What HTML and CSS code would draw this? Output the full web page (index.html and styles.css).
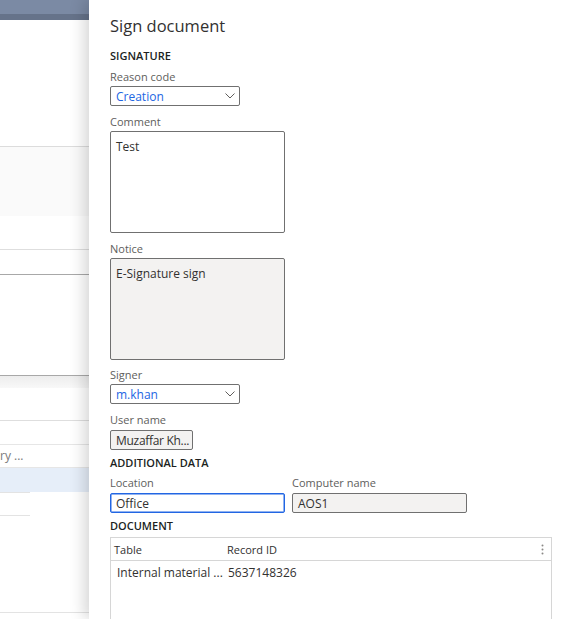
FILE: index.html
```html
<!DOCTYPE html>
<html lang="en">
<head>
<meta charset="utf-8">
<title>Sign document</title>
<link rel="stylesheet" href="styles.css">
</head>
<body>
<div class="page">
  <div class="bg">
    <div class="bg-top"></div>
    <div class="bg-r1"></div>
    <div class="bg-r2"></div>
    <div class="bg-r3"></div>
    <div class="bg-r4"></div>
    <div class="bg-r5"></div>
    <div class="bg-r6"></div>
    <div class="bg-r7"></div>
    <div class="bg-r8"></div>
    <div class="bg-r9">ry ...</div>
    <div class="bg-r10"></div>
    <div class="bg-r11"></div>
    <div class="bg-r12"></div>
    <div class="bg-r13"></div>
  </div>

  <div class="panel">
    <h1 class="title">Sign document</h1>

    <div class="section s-signature">SIGNATURE</div>

    <div class="label l-reason">Reason code</div>
    <div class="select"><span class="select-value">Creation</span>
      <svg class="chevron" width="10" height="6" viewBox="0 0 10 6"><path d="M0.5 0.5 L5 5 L9.5 0.5" fill="none" stroke="#605e5c" stroke-width="1"/></svg>
    </div>

    <div class="label l-comment">Comment</div>
    <div class="textarea">Test</div>

    <div class="label l-notice">Notice</div>
    <div class="textarea readonly">E-Signature sign</div>

    <div class="label l-signer">Signer</div>
    <div class="select"><span class="select-value">m.khan</span>
      <svg class="chevron" width="10" height="6" viewBox="0 0 10 6"><path d="M0.5 0.5 L5 5 L9.5 0.5" fill="none" stroke="#605e5c" stroke-width="1"/></svg>
    </div>

    <div class="label l-user">User name</div>
    <div class="input readonly short">Muzaffar Kh...</div>

    <div class="section s-additional">ADDITIONAL DATA</div>

    <div class="field-row">
      <div class="field">
        <div class="label l-location">Location</div>
        <div class="input focused wide">Office</div>
      </div>
      <div class="field">
        <div class="label l-location">Computer name</div>
        <div class="input readonly wide">AOS1</div>
      </div>
    </div>

    <div class="section s-document">DOCUMENT</div>

    <div class="grid">
      <div class="grid-head">
        <div class="hcell c1">Table</div>
        <div class="hcell c2">Record ID</div>
        <svg class="kebab" width="3" height="11" viewBox="0 0 3 11"><circle cx="1.5" cy="1.5" r="1" fill="#8a8886"/><circle cx="1.5" cy="5.5" r="1" fill="#8a8886"/><circle cx="1.5" cy="9.5" r="1" fill="#8a8886"/></svg>
      </div>
      <div class="grid-row">
        <div class="dcell c1">Internal material ...</div>
        <div class="dcell c2">5637148326</div>
      </div>
    </div>
  </div>
</div>
</body>
</html>
```

FILE: styles.css
```css
html, body {
  margin: 0;
  padding: 0;
  height: 619px;
  overflow: hidden;
  background: #ffffff;
}

body {
  font-family: "Open Sans", "Noto Sans", sans-serif;
  color: #323130;
}

.page {
  display: flex;
  height: 619px;
  overflow: hidden;
}

/* ---------- background page ---------- */
.bg {
  width: 89px;
  flex: 0 0 89px;
  height: 619px;
  overflow: hidden;
  background: #ffffff;
}

.bg-top {
  height: 14px;
  background: #7b8aa4;
  border-bottom: 6px solid #66738a;
}

.bg-r1 { height: 126px; border-bottom: 1px solid #dcdcdc; }
.bg-r2 { height: 69px; background: #fafafa; }
.bg-r3 { height: 33px; border-bottom: 1px solid #dedede; }
.bg-r4 { height: 24px; border-bottom: 1px solid #a8a8a8; }
.bg-r5 { height: 100px; border-bottom: 1px solid #a8a8a8; }
.bg-r6 { height: 12px; background: linear-gradient(#ededed, #f8f8f8); }
.bg-r7 { height: 32px; border-bottom: 1px solid #dedede; }
.bg-r8 { height: 23px; border-bottom: 1px solid #e6e6e6; }
.bg-r9 {
  height: 22px;
  border-bottom: 1px solid #e6e6e6;
  font-size: 12px;
  line-height: 22px;
  color: #7a7a7a;
  white-space: nowrap;
}
.bg-r10 { height: 24px; background: #e6eef9; }
.bg-r11 { width: 30px; height: 22px; border-top: 1px solid #e3e3e3; }
.bg-r12 { width: 30px; height: 96px; border-top: 1px solid #e3e3e3; }
.bg-r13 { border-top: 1px solid #e3e3e3; }

/* ---------- panel ---------- */
.panel {
  position: relative;
  flex: 1 1 auto;
  background: #ffffff;
  box-shadow: -5px 0 14px rgba(0, 0, 0, 0.16);
  padding: 15px 0 0 21px;
  box-sizing: border-box;
  height: 619px;
  overflow: hidden;
}

.title {
  margin: 0;
  font-size: 16.5px;
  font-weight: 400;
  line-height: 22px;
  color: #323130;
}

.section {
  font-size: 11px;
  font-weight: 600;
  line-height: 16px;
  color: #201f1e;
}
.s-signature { margin-top: 11px; }
.s-additional { margin-top: 5px; }
.s-document { margin-top: 5px; }

.label {
  font-size: 11px;
  line-height: 16px;
  color: #605e5c;
  margin-bottom: 1px;
  white-space: nowrap;
}
.l-reason { margin-top: 5px; }
.l-comment { margin-top: 8px; }
.l-notice { margin-top: 8px; }
.l-signer { margin-top: 7px; }
.l-user { margin-top: 8px; margin-bottom: 2px; }
.l-location { margin-top: 4px; margin-bottom: 2px; }

.select {
  width: 130px;
  height: 20px;
  box-sizing: border-box;
  border: 1px solid #707070;
  border-radius: 2px;
  display: flex;
  align-items: center;
  justify-content: space-between;
  padding: 0 4px 0 5px;
}
.select-value {
  font-size: 12px;
  line-height: 16px;
  padding-top: 2px;
  color: #2266e3;
}
.chevron { display: block; }

.textarea {
  width: 175px;
  height: 102px;
  box-sizing: border-box;
  border: 1px solid #707070;
  border-radius: 2px;
  padding: 7px 5px 6px;
  font-size: 12px;
  line-height: 16px;
  color: #323130;
}

.readonly {
  background: #f3f2f1;
}

.input {
  height: 20px;
  box-sizing: border-box;
  border: 1px solid #707070;
  border-radius: 2px;
  padding: 1px 4px 0 5px;
  font-size: 12px;
  line-height: 17px;
  color: #323130;
  white-space: nowrap;
  overflow: hidden;
}
.input.short { width: 83px; letter-spacing: -0.3px; }
.input.wide { width: 175px; }
.input.focused { border-color: #2266e3; box-shadow: inset 0 0 0 0.5px #2266e3; }

.field-row {
  display: flex;
  gap: 7px;
}

.grid {
  margin-top: 3px;
  width: 442px;
  height: 90px;
  box-sizing: border-box;
  border: 1px solid #d6d6d6;
}

.grid-head {
  display: flex;
  align-items: center;
  height: 23px;
  box-sizing: border-box;
  border-bottom: 1px solid #d6d6d6;
  padding-top: 1px;
}
.hcell {
  font-size: 11px;
  line-height: 22px;
  color: #323130;
}
.hcell.c1 { width: 110px; padding-left: 3px; }
.hcell.c2 { padding-left: 3px; }
.kebab { display: block; margin-left: auto; margin-right: 7px; }

.grid-row {
  display: flex;
  padding-top: 1px;
}
.dcell {
  font-size: 12px;
  line-height: 22px;
  color: #323130;
  white-space: nowrap;
}
.dcell.c1 { width: 107px; padding-left: 6px; }
.dcell.c2 { padding-left: 4px; }
```
